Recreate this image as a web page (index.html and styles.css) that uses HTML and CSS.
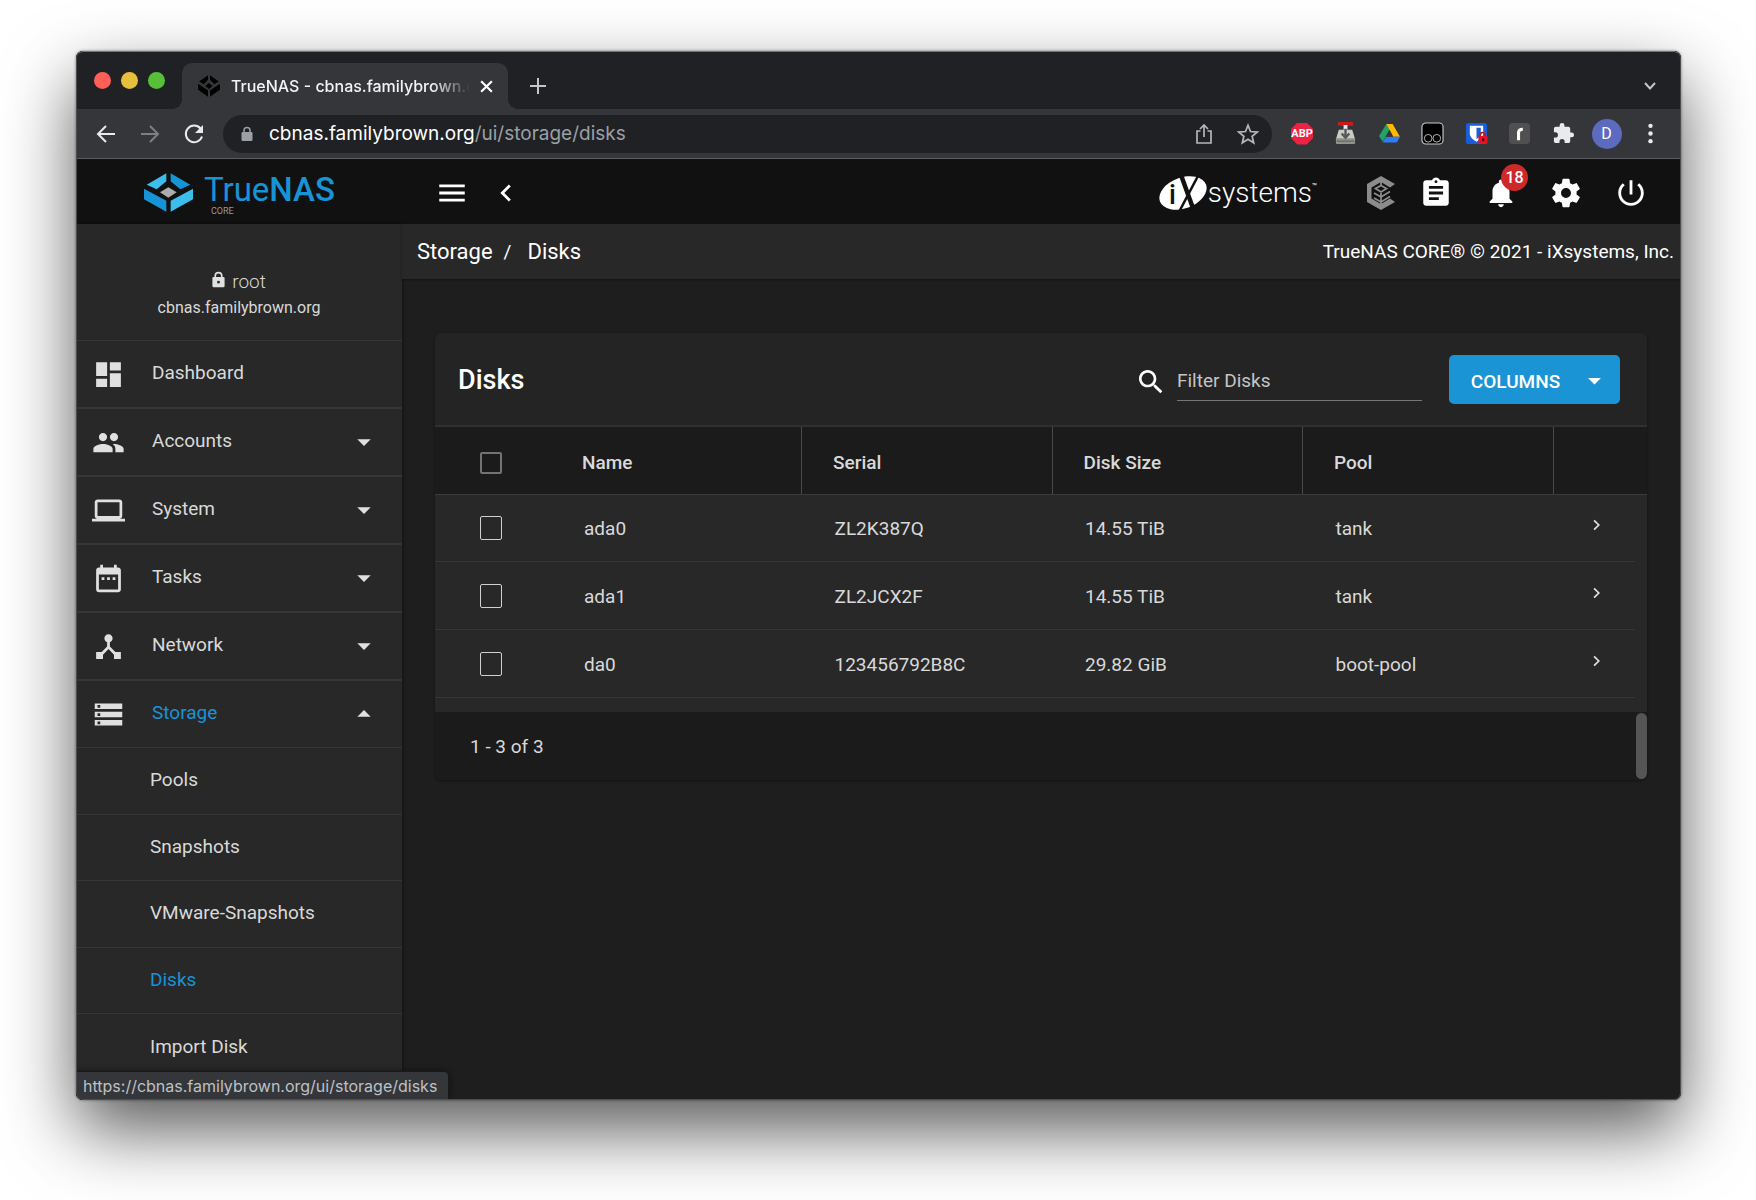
FILE: index.html
```html
<!DOCTYPE html>
<html lang="en">
<head>
    <meta charset="UTF-8">
    <title>TrueNAS - cbnas.familybrown.org</title>
    <link rel="stylesheet" href="styles.css">
</head>
<body>

<div class="window">
    <div class="tab-strip">
        <div class="lights">
            <span class="light red"></span>
            <span class="light yellow"></span>
            <span class="light green"></span>
        </div>
        <div class="tab">
            <svg class="favicon" viewBox="0 0 147 117" preserveAspectRatio="none">
                <path d="M8 35 67 1V25L38 49ZM80 1 139 35 109 49 80 25ZM0 47 67 83V116L0 79ZM147 47 80 83V116L147 79ZM48 58 73 43 98 58 73 74Z" fill="#000"/>
            </svg>
            <span class="tab-title">TrueNAS - cbnas.familybrown.org</span>
            <button class="tab-close" aria-label="Close tab">
                <svg viewBox="0 0 14 14"><path d="M2 2 12 12M12 2 2 12" stroke="#fff" stroke-width="2"/></svg>
            </button>
        </div>
        <button class="new-tab" aria-label="New tab">
            <svg viewBox="0 0 18 18"><path d="M9 1V17M1 9H17" stroke="#c4c6c9" stroke-width="2"/></svg>
        </button>
        <button class="tab-search" aria-label="Search tabs">
            <svg viewBox="0 0 14 14"><path d="M2 4 7 9.500 12 4" stroke="#c4c6c9" stroke-width="2" fill="none"/></svg>
        </button>
    </div>

    <div class="toolbar">
        <button class="nav-btn" aria-label="Back">
            <svg viewBox="0 0 24 24"><path d="M21 12H4M12 4 4 12 12 20" stroke="#e8eaed" stroke-width="2" fill="none"/></svg>
        </button>
        <button class="nav-btn" aria-label="Forward">
            <svg viewBox="0 0 24 24"><path d="M3 12H20M12 4 20 12 12 20" stroke="#7d7f83" stroke-width="2" fill="none"/></svg>
        </button>
        <button class="nav-btn" aria-label="Reload">
            <svg viewBox="0 0 24 24"><path d="M18.500 6.500A8.300 8.300 0 1 0 20 14.500" stroke="#e8eaed" stroke-width="2" fill="none"/><path d="M21 3V11H13Z" fill="#e8eaed"/></svg>
        </button>
        <div class="omnibox">
            <svg class="lock" viewBox="0 0 12 16"><path d="M3 7V4.500A3 3 0 0 1 9 4.500V7" stroke="#9aa0a6" stroke-width="1.500" fill="none"/><rect x="0.500" y="6" width="11" height="9" rx="1.200" fill="#9aa0a6"/></svg>
            <span class="url"><span class="host">cbnas.familybrown.org</span>/ui/storage/disks</span>
            <button class="omni-btn" aria-label="Share">
                <svg viewBox="0 0 20 22"><path d="M6.500 8H3V20H17V8H13.500M10 14V2.500M6 6 10 2 14 6" stroke="#b4b6b9" stroke-width="1.700" fill="none"/></svg>
            </button>
            <button class="omni-btn" aria-label="Bookmark">
                <svg viewBox="0 0 24 24"><path d="M12 2.500 14.700 9.300 22 9.900 16.500 14.500 18.200 21.600 12 17.800 5.800 21.600 7.500 14.500 2 9.900 9.300 9.300Z" stroke="#b4b6b9" stroke-width="1.900" fill="none"/></svg>
            </button>
        </div>
        <div class="extensions">
            <button class="ext abp" aria-label="Adblock Plus"><span>ABP</span></button>
            <button class="ext" aria-label="Downloads extension">
                <svg viewBox="0 0 22 24"><path d="M4 8H18L21 18H1Z" fill="#c9cbc4"/><rect x="1" y="17" width="20" height="6" rx="1" fill="#8f928b"/><path d="M2 20H20" stroke="#595c55"/><rect x="3" y="0" width="16" height="4" rx="1" fill="#cc1919"/><path d="M9 3H13V8H9Z" fill="#e9e9e9"/><path d="M11 7V16M7 12 11 16.500 15 12" stroke="#55585c" stroke-width="2.500" fill="none"/></svg>
            </button>
            <button class="ext" aria-label="Google Drive">
                <svg viewBox="0 0 22 22"><path d="M8 2H14L11 7.300 4.500 19 1 13.500Z" fill="#1fa463"/><path d="M8 2H14L21 14H14.500Z" fill="#ffba00"/><path d="M7.500 14H21L18 19.500H4.500Z" fill="#2f7df0"/><path d="M11 7.500 14.500 14H7.500Z" fill="#35363a"/></svg>
            </button>
            <button class="ext" aria-label="Tampermonkey">
                <svg viewBox="0 0 24 24"><rect x="1" y="1" width="22" height="22" rx="4" fill="#000" stroke="#c9c9c9" stroke-width="1.200"/><circle cx="7.500" cy="17" r="4" stroke="#bbb" fill="none"/><circle cx="16.500" cy="17" r="4" stroke="#bbb" fill="none"/></svg>
            </button>
            <button class="ext" aria-label="Bitwarden">
                <svg viewBox="0 0 24 24"><rect x="1" y="1" width="22" height="22" rx="3" fill="#175ddc"/><path d="M5 4H19V12C19 16 15 19 12 20.500 9 19 5 16 5 12Z" fill="#fff"/><path d="M12 6H16.500V12C16.500 14.500 14 16.500 12 17.800Z" fill="#175ddc"/><path d="M16 15V13.500A2.500 2.500 0 0 1 21 13.500V15" stroke="#c11" stroke-width="1.600" fill="none"/><rect x="14" y="14.500" width="9.500" height="8" rx="1" fill="#e81224"/><rect x="18" y="17" width="2" height="3" fill="#300"/></svg>
            </button>
            <button class="ext" aria-label="Reader">
                <svg viewBox="0 0 24 24"><rect x="1" y="1" width="22" height="22" rx="4" fill="#505050"/><path d="M11 19V11Q11 7.500 15.500 7.500" stroke="#fff" stroke-width="3.200" fill="none"/></svg>
            </button>
            <button class="ext" aria-label="Extensions">
                <svg viewBox="0 0 24 24"><path d="M20.500 11H19V7c0-1.100-.9-2-2-2h-4V3.500a2.500 2.500 0 0 0-5 0V5H4c-1.100 0-2 .9-2 2v3.800h1.500a2.700 2.700 0 0 1 0 5.400H2V20c0 1.100.9 2 2 2h3.800v-1.500a2.700 2.700 0 0 1 5.400 0V22H17c1.100 0 2-.9 2-2v-4h1.500a2.500 2.500 0 0 0 0-5z" fill="#e8eaed"/></svg>
            </button>
            <button class="ext avatar" aria-label="Profile">D</button>
            <button class="ext" aria-label="Browser menu">
                <svg viewBox="0 0 24 24" fill="#e8eaed"><circle cx="12" cy="4" r="2.300"/><circle cx="12" cy="12" r="2.300"/><circle cx="12" cy="20" r="2.300"/></svg>
            </button>
        </div>
    </div>

    <div class="app">
        <header class="app-header">
            <div class="brand">
                <svg class="brand-mark" viewBox="0 0 147 117">
                    <path d="M8 35 67 1V25L38 49ZM147 47 80 83V116L147 79Z" fill="#3cbdeb"/>
                    <path d="M80 1 139 35 109 49 80 25ZM0 47 67 83V116L0 79Z" fill="#1794d5"/>
                    <path d="M48 58 73 43 98 58 73 74Z" fill="#aeadae"/>
                </svg>
                <div class="brand-text">
                    <span class="brand-name">True<b>NAS</b></span>
                    <span class="brand-edition">CORE</span>
                </div>
            </div>
            <button class="icon-btn menu-btn" aria-label="Toggle menu">
                <svg viewBox="0 0 24 24"><path d="M3 18h18v-2H3v2zm0-5h18v-2H3v2zm0-7v2h18V6H3z" fill="#fff"/></svg>
            </button>
            <button class="icon-btn collapse-btn" aria-label="Collapse menu">
                <svg viewBox="0 0 24 24"><path d="M15.400 7.400 14 6l-6 6 6 6 1.400-1.400L10.800 12z" fill="#fff"/></svg>
            </button>
            <div class="ix-logo">
                <svg class="ix-mark" viewBox="0 0 48 36">
                    <ellipse cx="24" cy="18" rx="24.500" ry="15.500" transform="rotate(-20 24 18)" fill="#fff"/>
                    <text x="10" y="29" class="ix-i">i</text>
                    <path d="M22 0 35 36" stroke="#111" stroke-width="4.500"/>
                    <path d="M40 -1 20 37" stroke="#111" stroke-width="2.500"/>
                </svg>
                <span class="ix-name">systems</span><span class="ix-tm">™</span>
            </div>
            <svg class="tc-icon" viewBox="0 0 30 34">
                <path d="M15 0 29 8 24 11.500 15 6 5.500 11.500V22.500L15 28 24 22.500 29 26 15 34 1 26V8Z" fill="#8c8c8c"/>
                <path d="M15 29V17M8 17 15 21 24 15.500M8 22 15 26 24 20.500M15 9.500V6M9.500 12.500 15 16 20.500 12.500 15 9.500Z" stroke="#8c8c8c" stroke-width="1.800" fill="none"/>
            </svg>
            <div class="header-actions">
                <button class="icon-btn" aria-label="Task manager">
                    <svg viewBox="0 0 24 24"><path d="M19 3h-4.180C14.400 1.840 13.300 1 12 1c-1.300 0-2.400.84-2.820 2H5c-1.100 0-2 .9-2 2v14c0 1.100.9 2 2 2h14c1.100 0 2-.9 2-2V5c0-1.100-.9-2-2-2zm-7 0c.55 0 1 .45 1 1s-.45 1-1 1-1-.45-1-1 .45-1 1-1zm2 14H7v-2h7v2zm3-4H7v-2h10v2zm0-4H7V7h10v2z" fill="#fff"/></svg>
                </button>
                <button class="icon-btn alerts" aria-label="Alerts">
                    <svg viewBox="0 0 24 24"><path d="M12 22c1.100 0 2-.9 2-2h-4c0 1.100.89 2 2 2zm6-6v-5c0-3.070-1.640-5.640-4.500-6.320V4c0-.83-.67-1.500-1.500-1.500s-1.500.67-1.500 1.500v.68C7.630 5.360 6 7.920 6 11v5l-2 2v1h16v-1l-2-2z" fill="#fff"/></svg>
                    <span class="badge">18</span>
                </button>
                <button class="icon-btn" aria-label="Settings">
                    <svg viewBox="0 0 24 24"><path d="M19.430 12.980c.04-.32.070-.64.070-.98s-.03-.66-.07-.98l2.110-1.650c.19-.15.24-.42.12-.64l-2-3.460c-.12-.22-.39-.3-.61-.22l-2.490 1c-.52-.4-1.080-.73-1.690-.98l-.38-2.650C14.460 2.180 14.250 2 14 2h-4c-.25 0-.46.18-.49.42l-.38 2.650c-.61.25-1.170.59-1.690.98l-2.490-1c-.23-.09-.49 0-.61.22l-2 3.460c-.13.22-.07.49.12.64l2.110 1.650c-.04.32-.07.65-.07.98s.03.66.07.98l-2.110 1.650c-.19.15-.24.42-.12.64l2 3.460c.12.22.39.3.61.22l2.490-1c.52.4 1.080.73 1.690.98l.38 2.650c.03.24.24.42.49.42h4c.25 0 .46-.18.49-.42l.38-2.650c.61-.25 1.170-.59 1.690-.98l2.490 1c.23.09.49 0 .61-.22l2-3.460c.12-.22.07-.49-.12-.64l-2.110-1.650zM12 15.500c-1.930 0-3.500-1.570-3.500-3.500s1.570-3.500 3.500-3.500 3.500 1.570 3.500 3.500-1.570 3.500-3.500 3.500z" fill="#fff"/></svg>
                </button>
                <button class="icon-btn" aria-label="Power">
                    <svg viewBox="0 0 24 24"><path d="M13 3h-2v10h2V3zm4.830 2.170-1.420 1.420C17.990 7.860 19 9.810 19 12c0 3.870-3.130 7-7 7s-7-3.130-7-7c0-2.190 1.010-4.140 2.580-5.420L6.170 5.170C4.230 6.820 3 9.260 3 12c0 4.970 4.030 9 9 9s9-4.030 9-9c0-2.740-1.230-5.180-3.170-6.830z" fill="#fff"/></svg>
                </button>
            </div>
        </header>

        <div class="app-body">
            <nav class="sidebar">
                <div class="profile">
                    <div class="user">
                        <svg viewBox="0 0 16 20"><path d="M4 8V5.500A4 4 0 0 1 12 5.500V8" stroke="#e0e0e0" stroke-width="2" fill="none"/><path d="M2 7H14Q15.500 7 15.500 8.500V18Q15.500 19.500 14 19.500H2Q.5 19.500 .5 18V8.500Q.5 7 2 7ZM8 11.500A1.700 1.700 0 1 0 8 15A1.700 1.700 0 1 0 8 11.500Z" fill="#e0e0e0" fill-rule="evenodd"/></svg>
                        <span>root</span>
                    </div>
                    <div class="hostname">cbnas.familybrown.org</div>
                </div>
                <ul class="menu">
                    <li>
                        <a class="menu-item" href="#">
                            <svg class="menu-icon" viewBox="0 0 24 24"><path d="M3 13h8V3H3v10zm0 8h8v-6H3v6zm10 0h8V11h-8v10zm0-18v6h8V3h-8z"/></svg>
                            <span>Dashboard</span>
                        </a>
                    </li>
                    <li>
                        <a class="menu-item" href="#">
                            <svg class="menu-icon" viewBox="0 0 24 24"><path d="M16 11c1.660 0 2.990-1.340 2.990-3S17.660 5 16 5c-1.660 0-3 1.340-3 3s1.340 3 3 3zm-8 0c1.660 0 2.990-1.340 2.990-3S9.660 5 8 5C6.340 5 5 6.340 5 8s1.340 3 3 3zm0 2c-2.330 0-7 1.170-7 3.500V19h14v-2.500c0-2.330-4.670-3.500-7-3.500zm8 0c-.29 0-.62.02-.97.05 1.160.84 1.970 1.970 1.970 3.450V19h6v-2.500c0-2.330-4.670-3.500-7-3.500z"/></svg>
                            <span>Accounts</span>
                            <svg class="arrow" viewBox="0 0 24 24"><path d="m7 10 5 5 5-5z"/></svg>
                        </a>
                    </li>
                    <li>
                        <a class="menu-item" href="#">
                            <svg class="menu-icon" viewBox="0 0 24 24"><path d="M20 18c1.100 0 1.990-.9 1.990-2L22 6c0-1.100-.9-2-2-2H4c-1.100 0-2 .9-2 2v10c0 1.100.9 2 2 2H0v2h24v-2h-4zM4 6h16v10H4V6z"/></svg>
                            <span>System</span>
                            <svg class="arrow" viewBox="0 0 24 24"><path d="m7 10 5 5 5-5z"/></svg>
                        </a>
                    </li>
                    <li>
                        <a class="menu-item" href="#">
                            <svg class="menu-icon" viewBox="0 0 24 24"><path d="M9 11H7v2h2v-2zm4 0h-2v2h2v-2zm4 0h-2v2h2v-2zm2-7h-1V2h-2v2H8V2H6v2H5c-1.110 0-1.990.9-1.990 2L3 20c0 1.100.89 2 2 2h14c1.100 0 2-.9 2-2V6c0-1.100-.9-2-2-2zm0 16H5V9h14v11z"/></svg>
                            <span>Tasks</span>
                            <svg class="arrow" viewBox="0 0 24 24"><path d="m7 10 5 5 5-5z"/></svg>
                        </a>
                    </li>
                    <li>
                        <a class="menu-item" href="#">
                            <svg class="menu-icon" viewBox="0 0 24 24"><path d="m17 16-4-4V8.820C14.160 8.400 15 7.300 15 6c0-1.660-1.340-3-3-3S9 4.340 9 6c0 1.300.84 2.400 2 2.820V12l-4 4H3v5h5v-3.050l4-4.200 4 4.200V21h5v-5h-4z"/></svg>
                            <span>Network</span>
                            <svg class="arrow" viewBox="0 0 24 24"><path d="m7 10 5 5 5-5z"/></svg>
                        </a>
                    </li>
                    <li>
                        <a class="menu-item open" href="#">
                            <svg class="menu-icon" viewBox="0 0 24 24"><path d="M2 20h20v-4H2v4zm2-3h2v2H4v-2zM2 4v4h20V4H2zm4 3H4V5h2v2zm-4 7h20v-4H2v4zm2-3h2v2H4v-2z"/></svg>
                            <span>Storage</span>
                            <svg class="arrow" viewBox="0 0 24 24"><path d="m7 14 5-5 5 5z"/></svg>
                        </a>
                        <ul class="sub-menu">
                            <li><a href="#">Pools</a></li>
                            <li><a href="#">Snapshots</a></li>
                            <li><a href="#">VMware-Snapshots</a></li>
                            <li><a href="#" class="active">Disks</a></li>
                            <li><a href="#">Import Disk</a></li>
                        </ul>
                    </li>
                </ul>
            </nav>

            <main class="content">
                <div class="breadcrumb-bar">
                    <div class="breadcrumb">
                        <a href="#">Storage</a>
                        <span class="slash">/</span>
                        <a href="#">Disks</a>
                    </div>
                    <div class="copyright">TrueNAS CORE® © 2021 - iXsystems, Inc.</div>
                </div>

                <section class="card">
                    <div class="card-header">
                        <h1>Disks</h1>
                        <label class="search-icon" for="filter" aria-label="Filter">
                            <svg viewBox="0 0 24 24"><path d="M15.500 14h-.79l-.28-.27C15.410 12.590 16 11.110 16 9.500 16 5.910 13.090 3 9.500 3S3 5.910 3 9.500 5.910 16 9.500 16c1.610 0 3.090-.59 4.230-1.570l.27.28v.79l5 4.990L20.490 19l-4.990-5zm-6 0C7.010 14 5 11.990 5 9.500S7.010 5 9.500 5 14 7.010 14 9.500 11.990 14 9.500 14z" fill="#fff"/></svg>
                        </label>
                        <input type="text" id="filter" class="filter" placeholder="Filter Disks">
                        <button class="columns-btn">
                            COLUMNS
                            <svg viewBox="0 0 24 24"><path d="m7 10 5 5 5-5z" fill="#fff"/></svg>
                        </button>
                    </div>

                    <table class="disks">
                        <colgroup>
                            <col class="col-check">
                            <col>
                            <col>
                            <col>
                            <col>
                            <col class="col-expand">
                        </colgroup>
                        <thead>
                            <tr>
                                <th><input type="checkbox" class="check-all" aria-label="Select all disks"></th>
                                <th>Name</th>
                                <th>Serial</th>
                                <th>Disk Size</th>
                                <th>Pool</th>
                                <th></th>
                            </tr>
                        </thead>
                        <tbody>
                            <tr>
                                <td><input type="checkbox" aria-label="Select ada0"></td>
                                <td>ada0</td>
                                <td>ZL2K387Q</td>
                                <td>14.55 TiB</td>
                                <td>tank</td>
                                <td><button class="expand" aria-label="Expand ada0"><svg viewBox="0 0 10 12"><path d="M2.500 2 6.500 6 2.500 10" /></svg></button></td>
                            </tr>
                            <tr>
                                <td><input type="checkbox" aria-label="Select ada1"></td>
                                <td>ada1</td>
                                <td>ZL2JCX2F</td>
                                <td>14.55 TiB</td>
                                <td>tank</td>
                                <td><button class="expand" aria-label="Expand ada1"><svg viewBox="0 0 10 12"><path d="M2.500 2 6.500 6 2.500 10" /></svg></button></td>
                            </tr>
                            <tr>
                                <td><input type="checkbox" aria-label="Select da0"></td>
                                <td>da0</td>
                                <td>123456792B8C</td>
                                <td>29.82 GiB</td>
                                <td>boot-pool</td>
                                <td><button class="expand" aria-label="Expand da0"><svg viewBox="0 0 10 12"><path d="M2.500 2 6.500 6 2.500 10" /></svg></button></td>
                            </tr>
                        </tbody>
                    </table>

                    <div class="card-footer">
                        <span>1 - 3 of 3</span>
                        <div class="scroll-thumb"></div>
                    </div>
                </section>
            </main>
        </div>
    </div>

    <div class="status-bubble">https://cbnas.familybrown.org/ui/storage/disks</div>
</div>

</body>
</html>
```
FILE: styles.css
```css
* {
    box-sizing: border-box;
}

body {
    margin: 0;
    height: 100vh;
    padding: 51px 75px 100px 76px;
    display: flex;
    background: #fff;
    font-family: Roboto, "Liberation Sans", sans-serif;
    font-size: 19px;
    color: #d9d9d9;
    overflow: hidden;
}

button {
    background: none;
    border: none;
    padding: 0;
    font-family: inherit;
    cursor: pointer;
    display: flex;
    align-items: center;
    justify-content: center;
}

a {
    color: inherit;
    text-decoration: none;
}

ul {
    list-style: none;
    margin: 0;
    padding: 0;
}

svg {
    display: block;
    flex-shrink: 0;
}

/* Browser window */
.window {
    position: relative;
    flex: 1;
    min-width: 0;
    display: flex;
    flex-direction: column;
    border-radius: 7px;
    overflow: hidden;
    background: #1e1e1e;
    box-shadow: 0 30px 70px rgba(0, 0, 0, 0.65), 0 0 3px rgba(0, 0, 0, 0.5);
}

.window::after {
    content: "";
    position: absolute;
    inset: 0;
    border: 1px solid #4c4d4f;
    border-top-color: #737476;
    border-radius: 7px;
    pointer-events: none;
}

.tab-strip {
    display: flex;
    align-items: flex-end;
    height: 58px;
    padding-right: 24px;
    background: #202124;
    font-family: Inter, sans-serif;
}

.lights {
    display: flex;
    gap: 10px;
    padding-left: 18px;
    margin-right: 17px;
    height: 37px;
}

.light {
    width: 17px;
    height: 17px;
    border-radius: 50%;
}

.red { background: #ff5f57; }
.yellow { background: #e6bf3c; }
.green { background: #57c038; }

.tab {
    position: relative;
    display: flex;
    align-items: center;
    width: 326px;
    height: 46px;
    padding: 0 14px 0 16px;
    background: #35363a;
    border-radius: 10px 10px 0 0;
}

.tab::before,
.tab::after {
    content: "";
    position: absolute;
    bottom: 0;
    width: 10px;
    height: 10px;
}

.tab::before {
    left: -10px;
    background: radial-gradient(circle at 0 0, transparent 10px, #35363a 10px);
}

.tab::after {
    right: -10px;
    background: radial-gradient(circle at 100% 0, transparent 10px, #35363a 10px);
}

.favicon {
    width: 22px;
    height: 22px;
}

.tab-title {
    flex: 1;
    margin: 0 9px 0 11px;
    font-size: 16px;
    font-weight: 500;
    color: #f1f3f4;
    white-space: nowrap;
    overflow: hidden;
    -webkit-mask-image: linear-gradient(to right, #000 84%, transparent);
    mask-image: linear-gradient(to right, #000 84%, transparent);
}

.tab-close svg {
    width: 15px;
    height: 15px;
}

.new-tab {
    height: 46px;
    margin-left: 21px;
}

.new-tab svg {
    width: 18px;
    height: 18px;
}

.tab-search {
    height: 46px;
    margin-left: auto;
}

.tab-search svg {
    width: 14px;
    height: 14px;
}

.toolbar {
    display: flex;
    align-items: center;
    height: 50px;
    padding: 0 16px 0 8px;
    background: #35363a;
    border-bottom: 1px solid #5b5c60;
    font-family: Inter, sans-serif;
}

.nav-btn {
    width: 44px;
    height: 44px;
}

.nav-btn svg {
    width: 24px;
    height: 24px;
}

.omnibox {
    flex: 1;
    display: flex;
    align-items: center;
    height: 38px;
    margin: 0 15px 0 7px;
    padding: 0 12px 0 18px;
    background: #202124;
    border-radius: 19px;
}

.lock {
    width: 12px;
    height: 16px;
}

.url {
    flex: 1;
    margin-left: 16px;
    font-size: 19px;
    color: #9aa0a6;
}

.host {
    color: #fff;
}

.omni-btn {
    width: 24px;
    height: 24px;
    margin-left: 20px;
}

.omni-btn svg {
    width: 22px;
    height: 22px;
}

.extensions {
    display: flex;
    align-items: center;
    justify-content: space-between;
    width: 378px;
}

.ext {
    width: 30px;
    height: 30px;
}

.ext svg {
    width: 23px;
    height: 23px;
}

.abp span {
    width: 22px;
    height: 22px;
    line-height: 22px;
    background: #ee2244;
    clip-path: polygon(29% 0, 71% 0, 100% 29%, 100% 71%, 71% 100%, 29% 100%, 0 71%, 0 29%);
    font-family: Roboto, sans-serif;
    font-size: 11px;
    font-weight: 700;
    color: #fff;
}

.avatar {
    border-radius: 50%;
    background: #5c6bc0;
    color: #fff;
    font-family: Roboto, sans-serif;
    font-size: 16px;
}

/* TrueNAS header */
.app {
    flex: 1;
    min-height: 0;
    display: flex;
    flex-direction: column;
}

.app-header {
    display: flex;
    align-items: center;
    height: 65px;
    padding: 2px 34px 0 0;
    background: #111;
}

.brand {
    display: flex;
    align-items: center;
    width: 326px;
    padding-left: 68px;
}

.brand-mark {
    width: 49px;
    height: 39px;
}

.brand-text {
    display: flex;
    flex-direction: column;
    margin-left: 11px;
    padding-top: 3px;
    color: #1794d5;
}

.brand-name {
    font-size: 33px;
    line-height: 34px;
}

.brand-name b {
    font-weight: 500;
}

.brand-edition {
    padding-left: 7px;
    font-size: 9px;
    line-height: 8px;
    color: #9a9a9a;
}

.icon-btn {
    position: relative;
    width: 32px;
    height: 34px;
}

.icon-btn svg {
    width: 34px;
    height: 34px;
}

.menu-btn {
    margin-left: 34px;
}

.collapse-btn {
    margin-left: 22px;
}

.ix-logo {
    display: flex;
    align-items: center;
    margin-left: auto;
    color: #fff;
}

.ix-mark {
    width: 48px;
    height: 36px;
}

.ix-i {
    font-family: Roboto, sans-serif;
    font-size: 27px;
    font-weight: 500;
    fill: #111;
}

.ix-name {
    margin-left: 1px;
    font-size: 28px;
    font-weight: 300;
}

.ix-tm {
    align-self: flex-start;
    font-size: 8px;
    line-height: 24px;
}

.tc-icon {
    width: 30px;
    height: 34px;
    margin: 0 24px 0 49px;
}

.header-actions {
    display: flex;
    gap: 33px;
}

.badge {
    position: absolute;
    top: -12px;
    right: -11px;
    width: 27px;
    height: 27px;
    border-radius: 50%;
    background: #ce2929;
    color: #fff;
    font-size: 16px;
    font-weight: 500;
    line-height: 27px;
    text-align: center;
}

/* Sidebar */
.app-body {
    flex: 1;
    min-height: 0;
    display: flex;
}

.sidebar {
    width: 326px;
    flex-shrink: 0;
    overflow: hidden;
    background: #282828;
    box-shadow: 1px 0 3px rgba(0, 0, 0, 0.4);
}

.profile {
    height: 117px;
    padding-top: 44px;
    border-bottom: 1px solid #363636;
    text-align: center;
}

.user {
    display: flex;
    justify-content: center;
    gap: 7px;
    font-weight: 300;
    line-height: 28px;
}

.user svg {
    width: 13px;
    height: 17px;
    margin-top: 3px;
}

.hostname {
    font-size: 16px;
    line-height: 24px;
}

.menu-item {
    display: flex;
    align-items: center;
    height: 68px;
    padding: 0 22px 0 16px;
    border-bottom: 2px solid #363636;
}

.menu-item span {
    padding-bottom: 3px;
}

.menu-icon {
    width: 33px;
    height: 33px;
    margin-right: 27px;
    fill: #e0e0e0;
}

.arrow {
    width: 32px;
    height: 32px;
    margin-left: auto;
    fill: #e0e0e0;
}

.menu-item.open {
    height: 67px;
    border-bottom-width: 1px;
}

.menu-item.open span {
    color: #1794d5;
}

.sub-menu {
    display: grid;
    grid-auto-rows: 1fr;
    height: 333px;
}

.sub-menu a {
    display: flex;
    align-items: center;
    height: 100%;
    padding-left: 74px;
    padding-bottom: 2px;
    border-bottom: 1px solid #363636;
}

.sub-menu .active {
    color: #1794d5;
}

/* Content */
.content {
    flex: 1;
    min-width: 0;
}

.breadcrumb-bar {
    display: flex;
    align-items: center;
    justify-content: space-between;
    height: 55px;
    padding: 0 7px 0 15px;
    background: #282828;
    box-shadow: 0 1px 2px rgba(0, 0, 0, 0.4);
    color: #fff;
}

.breadcrumb {
    display: flex;
    align-items: center;
    padding-bottom: 1px;
    font-size: 22px;
}

.slash {
    margin: 0 16px 0 11px;
    font-size: 19px;
}

.card {
    margin: 54px 34px 0 33px;
    border-radius: 7px;
    overflow: hidden;
    background: #282828;
    box-shadow: 0 1px 3px rgba(0, 0, 0, 0.4);
}

.card-header {
    display: flex;
    align-items: center;
    height: 94px;
    padding: 0 27px 0 23px;
    background: #242424;
    border-bottom: 2px solid #303030;
}

.card-header h1 {
    margin: 0 auto 0 0;
    padding-top: 2px;
    font-size: 27px;
    font-weight: 500;
    color: #fff;
}

.search-icon svg {
    width: 32px;
    height: 32px;
    margin: 6px 10px 0 0;
}

.filter {
    width: 245px;
    height: 43px;
    padding: 4px 0 0;
    background: none;
    border: none;
    border-bottom: 1px solid #777;
    outline: none;
    font-family: inherit;
    font-size: 19px;
    color: #fff;
}

.filter::placeholder {
    color: #c4c4c4;
}

.columns-btn {
    width: 171px;
    height: 49px;
    margin-left: 27px;
    padding: 5px 0 0 12px;
    gap: 19px;
    border-radius: 5px;
    background: #1a94d4;
    color: #fff;
    font-size: 19px;
    font-weight: 500;
}

.columns-btn svg {
    width: 31px;
    height: 31px;
    margin-bottom: 2px;
}

.disks {
    width: 100%;
    table-layout: fixed;
    border-collapse: collapse;
    margin-bottom: 14px;
}

.col-check { width: 116px; }
.col-expand { width: 94px; }

.disks th,
.disks td {
    padding: 0 0 0 32px;
    text-align: left;
}

.disks th {
    height: 67px;
    padding: 5px 0 0 31px;
    background: #1b1b1b;
    border-bottom: 1px solid #3a3a3a;
    font-weight: 500;
}

.disks th + th + th {
    border-left: 1px solid #4a4a4a;
}

.disks td {
    height: 68px;
    padding-left: 33px;
}

/* row lines stop short of the scrollbar gutter */
.disks tbody tr {
    background: linear-gradient(#363636, #363636) left bottom / calc(100% - 12px) 1px no-repeat;
}

.disks th:first-child,
.disks td:first-child {
    padding-left: 45px;
}

.disks input {
    display: block;
    appearance: none;
    width: 22px;
    height: 24px;
    margin: 0;
    border: 1px solid #d0d0d0;
    border-radius: 2px;
}

.disks .check-all {
    height: 22px;
    border: 2px solid #737373;
}

.expand {
    width: 22px;
    height: 22px;
    margin-bottom: 6px;
}

.expand svg {
    width: 12px;
    height: 14px;
    fill: none;
    stroke: #e0e0e0;
    stroke-width: 1.500;
}

.card-footer {
    display: flex;
    justify-content: space-between;
    height: 68px;
    padding-left: 35px;
    background: #1b1b1b;
    line-height: 70px;
}

.scroll-thumb {
    width: 11px;
    margin: 1px 0;
    border-radius: 6px;
    background: #555;
}

.status-bubble {
    position: absolute;
    left: 0;
    bottom: 0;
    height: 29px;
    padding: 0 11px 0 6px;
    background: #35363a;
    border: 1px solid #1a1a1c;
    border-top-right-radius: 5px;
    box-shadow: 0 0 6px rgba(0, 0, 0, 0.5);
    font-family: Inter, sans-serif;
    font-size: 16px;
    line-height: 28px;
    color: #bdc1c6;
}
```
